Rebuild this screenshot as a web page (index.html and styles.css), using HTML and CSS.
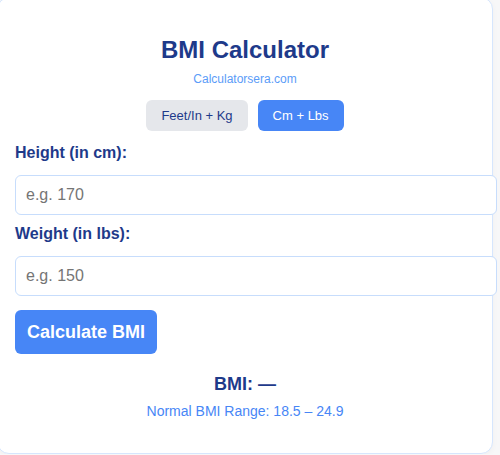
FILE: index.html
```html
<!DOCTYPE html>
<html lang="en">
<head>
<meta charset="utf-8">
<title>BMI Calculator</title>
<link rel="stylesheet" href="styles.css">
</head>
<body>
<div class="card">
  <h1 class="title">BMI Calculator</h1>
  <div class="site">Calculatorsera.com</div>
  <div class="toggle">
    <button class="tab">Feet/In + Kg</button>
    <button class="tab active">Cm + Lbs</button>
  </div>
  <label class="label" for="h">Height (in cm):</label>
  <input class="field" id="h" type="number" placeholder="e.g. 170">
  <label class="label" for="w">Weight (in lbs):</label>
  <input class="field" id="w" type="number" placeholder="e.g. 150">
  <button class="calc">Calculate BMI</button>
  <div class="result">BMI: —</div>
  <div class="range">Normal BMI Range: 18.5 – 24.9</div>
</div>
</body>
</html>
```
FILE: styles.css
```css
html, body {
  margin: 0;
  padding: 0;
}
body {
  background: #f7f7f8;
  font-family: "Liberation Sans", Arial, sans-serif;
  overflow: hidden;
}
.card {
  margin: -3px 0 0 -3px;
  width: 460px;
  padding: 17px 17px 34px 17px;
  background: #ffffff;
  border: 1px solid #d6e6fd;
  border-radius: 12px;
  box-shadow: 0 2px 6px rgba(0, 0, 0, 0.03);
}
.title {
  margin: 21px 0 0 0;
  font-size: 24px;
  font-weight: bold;
  color: #1e3a8a;
  text-align: center;
}
.site {
  margin-top: 8px;
  font-size: 12px;
  color: #5b9cf8;
  text-align: center;
}
.toggle {
  margin-top: 14px;
  display: flex;
  justify-content: center;
  gap: 10px;
}
.tab {
  font-family: "Liberation Sans", Arial, sans-serif;
  font-size: 13px;
  padding: 8px 15px;
  border: none;
  border-radius: 6px;
  background: #e5e7eb;
  color: #1e3a8a;
  line-height: 15px;
}
.tab.active {
  background: #4786f6;
  color: #ffffff;
}
.label {
  display: block;
  margin-top: 13px;
  font-size: 16px;
  font-weight: bold;
  color: #1e3a8a;
}
.field {
  display: block;
  margin-top: 13px;
  width: 460px;
  padding: 10px;
  font-family: "Liberation Sans", Arial, sans-serif;
  font-size: 16px;
  line-height: 18px;
  border: 1px solid #c7ddfc;
  border-radius: 6px;
  background: #ffffff;
  color: #111827;
  outline: none;
}
.field::placeholder {
  color: #757575;
}
.field + .label {
  margin-top: 10px;
}
.calc {
  display: block;
  margin-top: 14px;
  padding: 12px;
  font-family: "Liberation Sans", Arial, sans-serif;
  font-size: 18px;
  font-weight: bold;
  line-height: 20px;
  color: #ffffff;
  background: #4786f6;
  border: none;
  border-radius: 6px;
}
.result {
  margin-top: 20px;
  font-size: 18px;
  font-weight: bold;
  color: #1e3a8a;
  text-align: center;
}
.range {
  margin-top: 8px;
  font-size: 14px;
  color: #4786f6;
  text-align: center;
}
```
